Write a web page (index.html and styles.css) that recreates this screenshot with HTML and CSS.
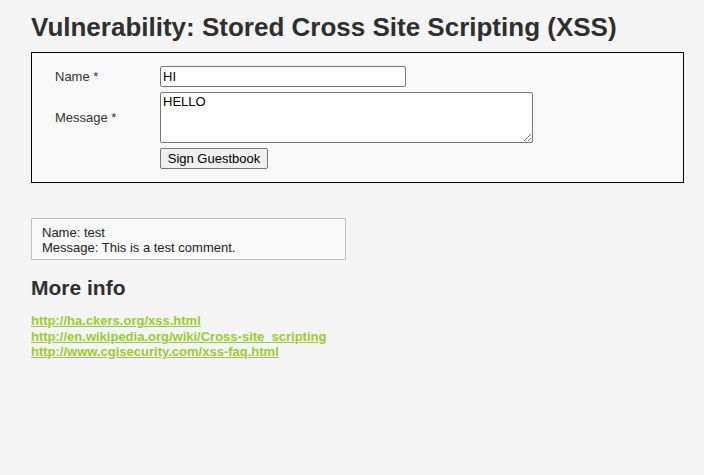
FILE: index.html
```html
<!DOCTYPE html>
<html>
<head>
<meta charset="utf-8">
<link rel="stylesheet" href="styles.css">
</head>
<body>
<div class="body-padded">
  <h1 class="title">Vulnerability: Stored Cross Site Scripting (XSS)</h1>
  <div class="vulnerable-code-area">
    <form class="guest-form">
      <label class="field-label label-name">Name *</label>
      <input class="name-input" type="text" value="HI">
      <label class="field-label">Message *</label>
      <textarea class="message-input">HELLO</textarea>
      <span></span>
      <div><button class="sign-btn" type="button">Sign Guestbook</button></div>
    </form>
  </div>
  <div class="guestbook-comments">
    Name: test<br>Message: This is a test comment.
  </div>
  <h2 class="subtitle">More info</h2>
  <ul class="links">
    <li><a href="#">http://ha.ckers.org/xss.html</a></li>
    <li><a href="#">http://en.wikipedia.org/wiki/Cross-site_scripting</a></li>
    <li><a href="#">http://www.cgisecurity.com/xss-faq.html</a></li>
  </ul>
</div>
</body>
</html>
```
FILE: styles.css
```css
html, body {
  margin: 0;
  padding: 0;
  background: #f4f4f4;
  font-family: "Liberation Sans", Arial, sans-serif;
  font-size: 13px;
  color: #2f2f2f;
}
.body-padded {
  padding: 0 20px 0 31px;
}
.title {
  margin: 0;
  padding-top: 12px;
  font-size: 26px;
  line-height: 30px;
  font-weight: bold;
  color: #2f2f2f;
}
.vulnerable-code-area {
  margin-top: 10px;
  border: 1px solid #000;
  background: #f7f8f7;
  padding: 13px 0 13px 23px;
}
.guest-form {
  display: grid;
  grid-template-columns: 105px auto;
  justify-content: start;
  align-items: center;
  row-gap: 5px;
}
.field-label {
  color: #333;
  font-size: 13px;
}
.name-input {
  box-sizing: border-box;
  width: 246px;
  height: 21px;
  margin: 0;
  padding: 1px 2px;
  border: 1px solid #767676;
  border-radius: 2px;
  background: #fff;
  font-family: "Liberation Sans", Arial, sans-serif;
  font-size: 13px;
  color: #000;
}
.message-input {
  box-sizing: border-box;
  width: 373px;
  height: 51px;
  margin: 0;
  padding: 1px 2px;
  border: 1px solid #767676;
  border-radius: 2px;
  background: #fff;
  font-family: "Liberation Sans", Arial, sans-serif;
  font-size: 13px;
  color: #000;
  resize: both;
}
.sign-btn {
  box-sizing: border-box;
  height: 21px;
  width: 108px;
  margin: 0;
  padding: 0 6px;
  border: 1px solid #767676;
  border-radius: 2px;
  background: #efefef;
  font-family: "Liberation Sans", Arial, sans-serif;
  font-size: 13px;
  color: #000;
}
.guestbook-comments {
  margin-top: 35px;
  width: 293px;
  border: 1px solid #c0c0c0;
  background: #f7f8f7;
  padding: 6px 10px 4px 10px;
  line-height: 15px;
  font-size: 13px;
  color: #222;
}
.subtitle {
  margin: 16px 0 0 0;
  font-size: 21px;
  line-height: 24px;
  font-weight: bold;
  color: #2f2f2f;
}
.links {
  list-style: none;
  margin: 13px 0 0 0;
  padding: 0;
}
.links li {
  line-height: 15.5px;
}
.links a {
  color: #99cc33;
  font-weight: bold;
  font-size: 13px;
  text-decoration: underline;
}
```
